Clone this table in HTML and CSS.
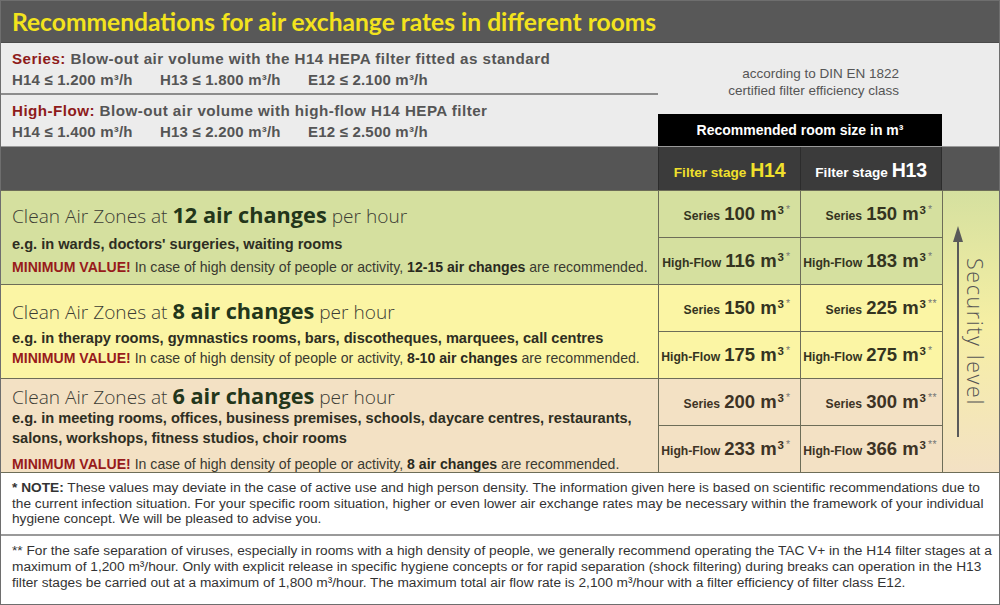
FILE: index.html
```html
<!DOCTYPE html>
<html>
<head>
<meta charset="utf-8">
<link rel="stylesheet" href="styles.css">
</head>
<body>
<div class="page">
  <div class="title">Recommendations for air exchange rates in different rooms</div>
  <div class="info">
    <div class="specs">
      <div class="spec spec-first">
        <div class="spec-head"><span class="red">Series:</span> Blow-out air volume with the H14 HEPA filter fitted as standard</div>
        <div class="spec-vals"><span class="val">H14 ≤ 1.200 m³/h</span><span class="val">H13 ≤ 1.800 m³/h</span><span class="val">E12 ≤ 2.100 m³/h</span></div>
      </div>
      <div class="spec">
        <div class="spec-head"><span class="red">High-Flow:</span> Blow-out air volume with high-flow H14 HEPA filter</div>
        <div class="spec-vals"><span class="val">H14 ≤ 1.400 m³/h</span><span class="val">H13 ≤ 2.200 m³/h</span><span class="val">E12 ≤ 2.500 m³/h</span></div>
      </div>
    </div>
    <div class="info-right">
      <div class="din">according to DIN EN 1822<br>certified filter efficiency class</div>
      <div class="rec-box">Recommended room size in m³</div>
    </div>
  </div>

  <div class="table">
    <div class="head-left"></div>
    <div class="head-cell h14">Filter stage <span class="big">H14</span></div>
    <div class="head-cell h13">Filter stage <span class="big">H13</span></div>
    <div class="head-right"></div>

    <div class="zone zone-a green r1">
      <div class="z1">Clean Air Zones at <b class="zgreen">12 air changes</b> per hour</div>
      <div class="z2">e.g. in wards, doctors' surgeries, waiting rooms</div>
      <div class="z3"><span class="min">MINIMUM VALUE!</span> In case of high density of people or activity, <b>12-15 air changes</b> are recommended.</div>
    </div>
    <div class="v green c2 r1 top"><span class="lbl">Series</span><span class="num">100 m<sup>3</sup></span><span class="ast">*</span></div>
    <div class="v green c3 r1 top"><span class="lbl">Series</span><span class="num">150 m<sup>3</sup></span><span class="ast">*</span></div>
    <div class="v green c2 r2"><span class="lbl">High-Flow</span><span class="num">116 m<sup>3</sup></span><span class="ast">*</span></div>
    <div class="v green c3 r2"><span class="lbl">High-Flow</span><span class="num">183 m<sup>3</sup></span><span class="ast">*</span></div>

    <div class="zone zone-b yellow r3">
      <div class="z1">Clean Air Zones at <b class="zgreen">8 air changes</b> per hour</div>
      <div class="z2">e.g. in therapy rooms, gymnastics rooms, bars, discotheques, marquees, call centres</div>
      <div class="z3"><span class="min">MINIMUM VALUE!</span> In case of high density of people or activity, <b>8-10 air changes</b> are recommended.</div>
    </div>
    <div class="v yellow c2 r3 top"><span class="lbl">Series</span><span class="num">150 m<sup>3</sup></span><span class="ast">*</span></div>
    <div class="v yellow c3 r3 top"><span class="lbl">Series</span><span class="num">225 m<sup>3</sup></span><span class="ast">**</span></div>
    <div class="v yellow c2 r4"><span class="lbl">High-Flow</span><span class="num">175 m<sup>3</sup></span><span class="ast">*</span></div>
    <div class="v yellow c3 r4"><span class="lbl">High-Flow</span><span class="num">275 m<sup>3</sup></span><span class="ast">*</span></div>

    <div class="zone zone-c peach r5">
      <div class="z1">Clean Air Zones at <b class="zgreen">6 air changes</b> per hour</div>
      <div class="z2">e.g. in meeting rooms, offices, business premises, schools, daycare centres, restaurants,</div>
      <div class="z2">salons, workshops, fitness studios, choir rooms</div>
      <div class="z3"><span class="min">MINIMUM VALUE!</span> In case of high density of people or activity, <b>8 air changes</b> are recommended.</div>
    </div>
    <div class="v peach c2 r5 top"><span class="lbl">Series</span><span class="num">200 m<sup>3</sup></span><span class="ast">*</span></div>
    <div class="v peach c3 r5 top"><span class="lbl">Series</span><span class="num">300 m<sup>3</sup></span><span class="ast">**</span></div>
    <div class="v peach c2 r6"><span class="lbl">High-Flow</span><span class="num">233 m<sup>3</sup></span><span class="ast">*</span></div>
    <div class="v peach c3 r6"><span class="lbl">High-Flow</span><span class="num">366 m<sup>3</sup></span><span class="ast">**</span></div>

    <div class="security">
      <svg class="arrow" width="10" height="211" viewBox="0 0 10 211">
        <polygon points="5,0 0,16 10,16" fill="#5a5a5a"/>
        <rect x="4" y="14" width="2" height="197" fill="#5a5a5a"/>
      </svg>
      <div class="sec-text">Security level</div>
    </div>
  </div>

  <div class="note note-1"><b>* NOTE:</b> These values may deviate in the case of active use and high person density. The information given here is based on scientific recommendations due to<br>the current infection situation. For your specific room situation, higher or even lower air exchange rates may be necessary within the framework of your individual<br>hygiene concept. We will be pleased to advise you.</div>
  <div class="note note-2">** For the safe separation of viruses, especially in rooms with a high density of people, we generally recommend operating the TAC V+ in the H14 filter stages at a<br>maximum of 1,200 m³/hour. Only with explicit release in specific hygiene concepts or for rapid separation (shock filtering) during breaks can operation in the H13<br>filter stages be carried out at a maximum of 1,800 m³/hour. The maximum total air flow rate is 2,100 m³/hour with a filter efficiency of filter class E12.</div>
</div>
</body>
</html>
```

FILE: styles.css
```css
* { box-sizing: border-box; }
html, body { margin: 0; padding: 0; background: #ffffff; }

.page {
  width: 1000px;
  height: 605px;
  border: 1px solid #6e6e6e;
  display: flex;
  flex-direction: column;
  overflow: hidden;
  font-family: "Liberation Sans", Arial, sans-serif;
  color: #333;
}

.title {
  height: 42px;
  flex: none;
  background: #585858;
  color: #f3e31d;
  font-family: "Lato", "Open Sans", sans-serif;
  font-weight: 700;
  font-size: 24.6px;
  line-height: 42px;
  padding-left: 11px;
  border-bottom: 1px solid #4a4a4a;
}

.info {
  height: 104px;
  flex: none;
  background: #ececec;
  display: flex;
  border-bottom: 1px solid #9a9a9a;
}
.specs { width: 657px; flex: none; }
.spec { height: 52px; padding: 7px 0 0 11px; color: #555; font-weight: 700; }
.spec-first { border-bottom: 2px solid #8c8c8c; }
.spec-head { font-size: 15.2px; line-height: 18px; letter-spacing: 0.45px; white-space: nowrap; }
.spec-vals { font-size: 15px; line-height: 20px; margin-top: 2px; white-space: nowrap; letter-spacing: 0.2px; }
.val { display: inline-block; width: 148px; }
.red { color: #8e1b1b; }

.info-right { flex: 1; display: flex; flex-direction: column; }
.din {
  text-align: right;
  padding: 22px 100px 0 0;
  font-size: 13.5px;
  line-height: 17px;
  color: #555;
}
.rec-box {
  margin-top: auto;
  width: 284px;
  height: 32px;
  background: #000;
  color: #fff;
  font-weight: 700;
  font-size: 14px;
  line-height: 33px;
  text-align: center;
}

.table {
  height: 325px;
  flex: none;
  display: grid;
  grid-template-columns: 657px 142px 142px 1fr;
  grid-template-rows: 43px repeat(6, 47px);
}
.head-left, .head-right { background: #555555; }
.head-left { grid-column: 1; grid-row: 1; }
.head-right { grid-column: 4; grid-row: 1; }
.head-cell {
  background: #3b3b3b;
  border-left: 1px solid #2c2c2c;
  display: flex;
  align-items: baseline;
  justify-content: center;
  font-weight: 700;
  font-size: 13.6px;
  padding-top: 12px;
}
.head-cell .big { font-size: 19.5px; margin-left: 4px; letter-spacing: -0.3px; }
.h14 { grid-column: 2; grid-row: 1; color: #f0e02c; }
.h13 { grid-column: 3; grid-row: 1; color: #ffffff; border-right: 1px solid #2c2c2c; }

.green { background: #d5e09f; }
.yellow { background: #fbf5a4; }
.peach { background: #f3e1c4; }

.zone {
  grid-column: 1;
  padding-left: 11px;
  border-top: 1px solid #6d6d58;
  color: #2e2e22;
  white-space: nowrap;
}
.zone.r1 { grid-row: 2 / span 2; padding-top: 11px; }
.zone.r3 { grid-row: 4 / span 2; padding-top: 13px; }
.zone.r5 { grid-row: 6 / span 2; padding-top: 4px; }

.z1 {
  font-family: "Open Sans", "Lato", sans-serif;
  font-weight: 300;
  font-size: 19.1px;
  line-height: 26px;
  color: #3c3c34;
}
.z1 .zgreen { font-weight: 700; font-size: 21.7px; color: #23361a; }
.z2 { font-weight: 700; font-size: 14.6px; line-height: 22px; margin-top: 4px; }
.z3 { font-size: 14.1px; line-height: 20px; margin-top: 2px; color: #3a3a30; }
.z3 b { color: #2a2a20; }
.min { color: #981b1b; font-weight: 700; }

.zone-b .z2 { line-height: 20px; margin-top: 3px; }
.zone-b .z3 { margin-top: 0; }
.zone-c .z2 { line-height: 20px; margin-top: -2px; }
.zone-c .z2 + .z2 { margin-top: 0; }
.zone-c .z3 { margin-top: 6px; }

.v {
  border-left: 1px solid #6d6d58;
  border-top: 1px solid #6d6d58;
  display: flex;
  align-items: center;
  justify-content: flex-end;
  padding: 0 4px 0 0;
  color: #34341f;
  font-weight: 700;
  white-space: nowrap;
}
.peach.v { color: #3d3325; }
.c2 { grid-column: 2; }
.c3 { grid-column: 3; }
.v.r1 { grid-row: 2; }
.v.r2 { grid-row: 3; }
.v.r3 { grid-row: 4; }
.v.r4 { grid-row: 5; }
.v.r5 { grid-row: 6; }
.v.r6 { grid-row: 7; }
.lbl { font-size: 12.2px; margin-right: 4px; padding-top: 4px; }
.num { font-size: 18.5px; }
.num sup { font-size: 11.5px; vertical-align: 6px; line-height: 0; margin-left: 1px; }
.ast { font-size: 10.5px; font-weight: 400; color: #777; align-self: flex-start; margin-top: 12px; margin-left: 2px; letter-spacing: 0.5px; min-width: 10px; }

.security {
  grid-column: 4;
  grid-row: 2 / span 6;
  border-left: 1px solid #6d6d58;
  border-top: 1px solid #6d6d58;
  background: linear-gradient(to bottom, #d5e09f 0%, #f6efa4 48%, #f3e1c4 100%);
  display: flex;
  align-items: center;
  padding-left: 10px;
}
.arrow { flex: none; display: block; }
.sec-text {
  writing-mode: vertical-rl;
  font-family: "Open Sans", "Lato", sans-serif;
  font-weight: 300;
  font-size: 21.5px;
  letter-spacing: 1.6px;
  line-height: 22px;
  width: 22px;
  margin-left: 1px;
  color: #555;
  white-space: nowrap;
}

.note {
  background: #fff;
  padding-left: 11px;
  font-size: 13.7px;
  color: #333;
  white-space: nowrap;
}
.note-1 { height: 62px; border-top: 1px solid #6d6d58; padding-top: 7px; line-height: 15.5px; }
.note-2 { flex: 1; border-top: 2px solid #9a9a9a; padding-top: 7px; line-height: 16px; }
```
